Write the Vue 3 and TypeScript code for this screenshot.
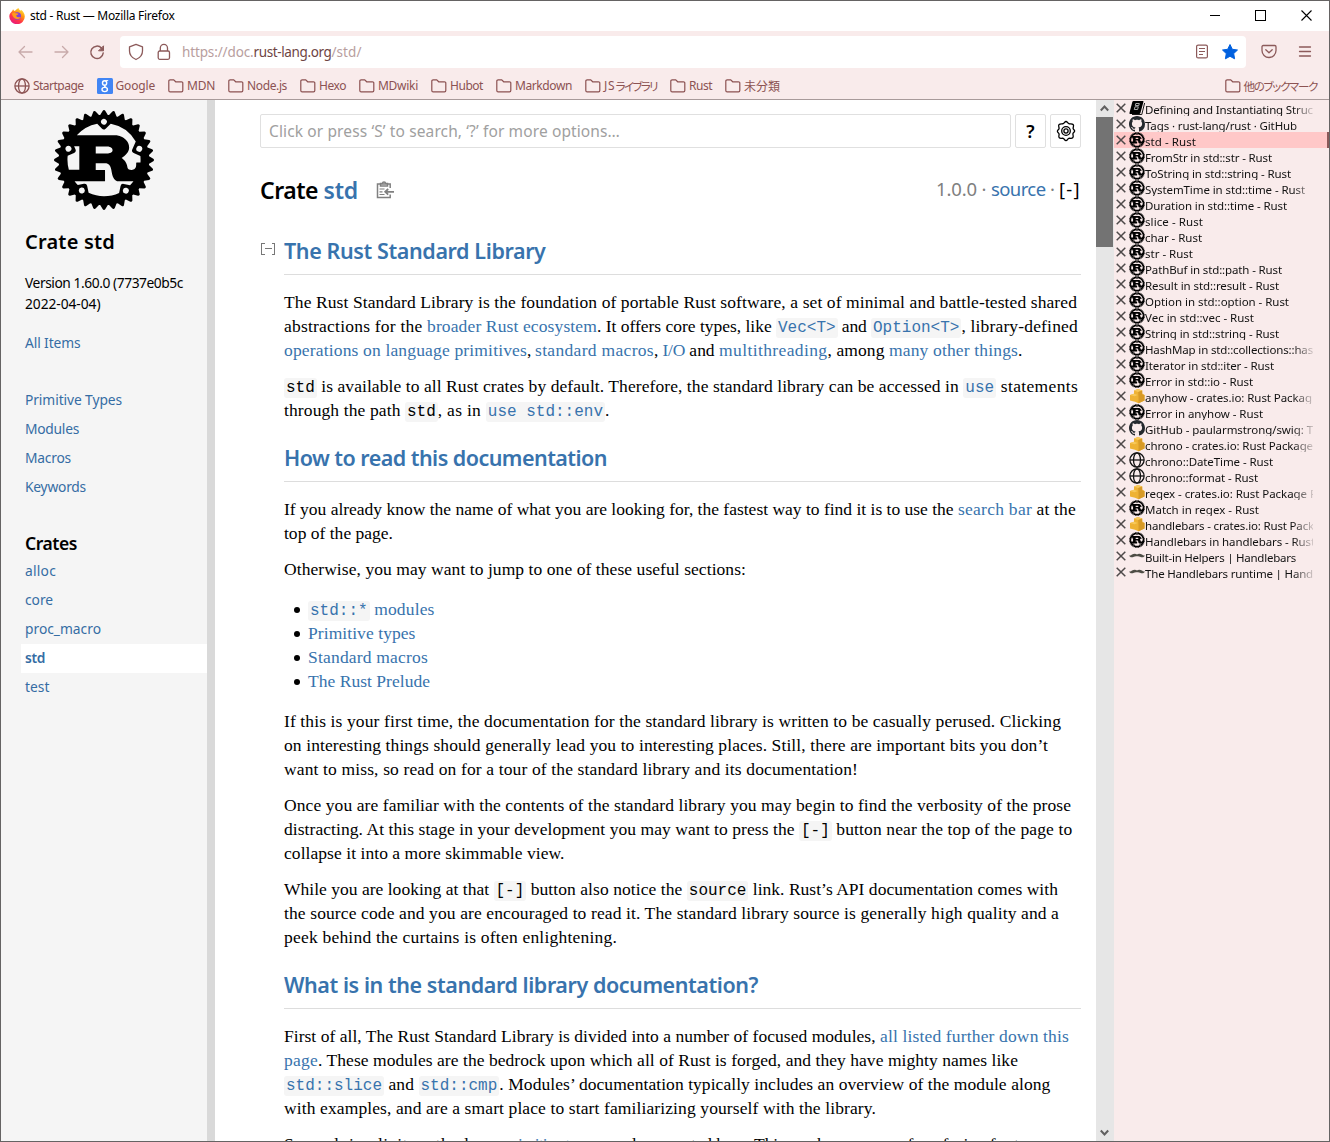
<script setup lang="ts">
import type { Directive } from 'vue'

// Tracks the text so that it fills the given width in pixels.
const vFit: Directive<HTMLElement, number> = {
  mounted(el, { value }) {
    const natural = el.getBoundingClientRect().width
    const count = Array.from(el.textContent ?? '').length
    if (natural && count) el.style.letterSpacing = `${(value - natural) / count}px`
  },
}

type Kind = 't' | 'a' | 'c' | 'ca' | 'b'
type Seg = [string, number, Kind?]
interface Block {
  kind: 'h' | 'p' | 'ul'
  lines: Seg[][]
}

const blocks: Block[] = [
  { kind: 'h', lines: [[['The Rust Standard Library', 261.5]]] },
  {
    kind: 'p',
    lines: [
      [['The Rust Standard Library is the foundation of portable Rust software, a set of minimal and battle-tested shared', 793]],
      [['abstractions for the ', 143], ['broader Rust ecosystem', 170, 'a'], ['. It offers core types, like ', 179], ['Vec<T>', 57.6, 'ca'], [' and ', 33.4], ['Option<T>', 86.4, 'ca'], [', library-defined', 116.5]],
      [['operations on language primitives', 243, 'a'], [', ', 8], ['standard macros', 119, 'a'], [', ', 8.5], ['I/O', 22.5, 'a'], [' and ', 34], ['multithreading', 108.5, 'a'], [', among ', 61.5], ['many other things', 129, 'a'], ['.', 4]],
    ],
  },
  {
    kind: 'p',
    lines: [
      [['std', 28.8, 'c'], [' is available to all Rust crates by default. Therefore, the standard library can be accessed in ', 646.5], ['use', 28.8, 'ca'], [' statements', 82]],
      [['through the path ', 121], ['std', 28.8, 'c'], [', as in ', 48], ['use std::env', 115.2, 'ca'], ['.', 4]],
    ],
  },
  { kind: 'h', lines: [[['How to read this documentation', 323]]] },
  {
    kind: 'p',
    lines: [
      [['If you already know the name of what you are looking for, the fastest way to find it is to use the ', 674], ['search bar', 74, 'a'], [' at the', 44]],
      [['top of the page.', 109]],
    ],
  },
  { kind: 'p', lines: [[['Otherwise, you may want to jump to one of these useful sections:', 462]]] },
  {
    kind: 'ul',
    lines: [
      [['std::*', 57.6, 'ca'], [' modules', 65, 'a']],
      [['Primitive types', 107.5, 'a']],
      [['Standard macros', 120, 'a']],
      [['The Rust Prelude', 122, 'a']],
    ],
  },
  {
    kind: 'p',
    lines: [
      [['If this is your first time, the documentation for the standard library is written to be casually perused. Clicking', 777]],
      [['on interesting things should generally lead you to interesting places. Still, there are important bits you don’t', 764]],
      [['want to miss, so read on for a tour of the standard library and its documentation!', 574]],
    ],
  },
  {
    kind: 'p',
    lines: [
      [['Once you are familiar with the contents of the standard library you may begin to find the verbosity of the prose', 787]],
      [['distracting. At this stage in your development you may want to press the ', 515], ['[-]', 28.8, 'b'], [' button near the top of the page to', 240.5]],
      [['collapse it into a more skimmable view.', 280.5]],
    ],
  },
  {
    kind: 'p',
    lines: [
      [['While you are looking at that ', 209.5], ['[-]', 28.8, 'b'], [' button also notice the ', 160.5], ['source', 57.6, 'c'], [' link. Rust’s API documentation comes with', 309.5]],
      [['the source code and you are encouraged to read it. The standard library source is generally high quality and a', 775]],
      [['peek behind the curtains is often enlightening.', 333]],
    ],
  },
  { kind: 'h', lines: [[['What is in the standard library documentation?', 474]]] },
  {
    kind: 'p',
    lines: [
      [['First of all, The Rust Standard Library is divided into a number of focused modules, ', 596], ['all listed further down this', 189, 'a']],
      [['page', 34, 'a'], ['. These modules are the bedrock upon which all of Rust is forged, and they have mighty names like', 700]],
      [['std::slice', 96, 'ca'], [' and ', 34.5], ['std::cmp', 76.8, 'ca'], ['. Modules’ documentation typically includes an overview of the module along', 551]],
      [['with examples, and are a smart place to start familiarizing yourself with the library.', 592]],
    ],
  },
  {
    kind: 'p',
    lines: [[['Second, implicit methods on ', 221], ['primitive types', 93, 'a'], [' are documented here. This can be a source of confusion for two', 442]]],
  },
]

const segClass: Record<Kind, string> = { t: '', a: 'link', c: 'code', ca: 'code link', b: 'code' }

interface Bookmark {
  parts: [string, number][]
  icon?: string
}
const bookmarks: Bookmark[] = [
  { parts: [['Startpage', 50.5]], icon: 'globe' },
  { parts: [['Google', 39.5]], icon: 'google' },
  { parts: [['MDN', 28]] },
  { parts: [['Node.js', 40]] },
  { parts: [['Hexo', 27]] },
  { parts: [['MDwiki', 40]] },
  { parts: [['Hubot', 33]] },
  { parts: [['Markdown', 57]] },
  { parts: [['JS', 11.5], ['ライブラリ', 41.5]] },
  { parts: [['Rust', 23]] },
  { parts: [['未分類', 36]] },
]

type Fav = 'book' | 'github' | 'rust' | 'crate' | 'globe' | 'bars'
const tabs: [string, number, Fav][] = [
  ['Defining and Instantiating Struc', 168, 'book'],
  ['Tags · rust-lang/rust · GitHub', 152, 'github'],
  ['std - Rust', 51, 'rust'],
  ['FromStr in std::str - Rust', 127, 'rust'],
  ['ToString in std::string - Rust', 146, 'rust'],
  ['SystemTime in std::time - Rust', 160, 'rust'],
  ['Duration in std::time - Rust', 142, 'rust'],
  ['slice - Rust', 58, 'rust'],
  ['char - Rust', 57, 'rust'],
  ['str - Rust', 48, 'rust'],
  ['PathBuf in std::path - Rust', 137, 'rust'],
  ['Result in std::result - Rust', 134, 'rust'],
  ['Option in std::option - Rust', 144, 'rust'],
  ['Vec in std::vec - Rust', 109, 'rust'],
  ['String in std::string - Rust', 134, 'rust'],
  ['HashMap in std::collections::has', 168, 'rust'],
  ['Iterator in std::iter - Rust', 129, 'rust'],
  ['Error in std::io - Rust', 108, 'rust'],
  ['anyhow - crates.io: Rust Packag', 167, 'crate'],
  ['Error in anyhow - Rust', 118, 'rust'],
  ['GitHub - paularmstrong/swig: T', 168, 'github'],
  ['chrono - crates.io: Rust Package', 168, 'crate'],
  ['chrono::DateTime - Rust', 128, 'globe'],
  ['chrono::format - Rust', 113, 'globe'],
  ['regex - crates.io: Rust Package R', 172, 'crate'],
  ['Match in regex - Rust', 114, 'rust'],
  ['handlebars - crates.io: Rust Pack', 169, 'crate'],
  ['Handlebars in handlebars - Rust', 170, 'rust'],
  ['Built-in Helpers | Handlebars', 151, 'bars'],
  ['The Handlebars runtime | Hand', 168, 'bars'],
]

const sections: [string, number][] = [['Primitive Types', 97], ['Modules', 54], ['Macros', 46], ['Keywords', 61]]
const crates: [string, number][] = [['alloc', 31], ['core', 28], ['proc_macro', 76], ['std', 20], ['test', 24.5]]
</script>

<template>
  <svg class="defs" width="0" height="0">
    <symbol id="rust" viewBox="0 0 24 24">
      <path d="M23.8346 11.7033l-1.0073-.6236a13.7268 13.7268 0 00-.0283-.2936l.8656-.8069a.3483.3483 0 00-.1154-.578l-1.1066-.414a8.4958 8.4958 0 00-.087-.2856l.6904-.9587a.3462.3462 0 00-.2257-.5446l-1.1663-.1894a9.3574 9.3574 0 00-.1407-.2622l.49-1.0761a.3437.3437 0 00-.0274-.3361.3486.3486 0 00-.3006-.154l-1.1845.0416a6.7444 6.7444 0 00-.1873-.2268l.2723-1.153a.3472.3472 0 00-.417-.4172l-1.1532.2724a14.0183 14.0183 0 00-.2278-.1873l.0415-1.1845a.3442.3442 0 00-.49-.328l-1.076.491c-.0872-.0476-.1742-.0952-.2623-.1407l-.1903-1.1673A.3483.3483 0 0016.256.955l-.9597.6905a8.4867 8.4867 0 00-.2855-.086l-.414-1.1066a.3483.3483 0 00-.5781-.1154l-.8069.8666a9.2936 9.2936 0 00-.2936-.0284L12.2946.1683a.3462.3462 0 00-.5892 0l-.6236 1.0073a13.7383 13.7383 0 00-.2936.0284L9.9803.3374a.3462.3462 0 00-.578.1154l-.4141 1.1065c-.0962.0274-.1903.0567-.2855.086L7.744.955a.3483.3483 0 00-.5447.2258L7.009 2.348a9.3574 9.3574 0 00-.2622.1407l-1.0762-.491a.3462.3462 0 00-.49.328l.0416 1.1845a7.9826 7.9826 0 00-.2278.1873L3.8413 3.425a.3472.3472 0 00-.4171.4171l.2713 1.1531c-.0628.075-.1255.1509-.1863.2268l-1.1845-.0415a.3462.3462 0 00-.328.49l.491 1.0761a9.167 9.167 0 00-.1407.2622l-1.1662.1894a.3483.3483 0 00-.2258.5446l.6904.9587a13.303 13.303 0 00-.087.2855l-1.1065.414a.3483.3483 0 00-.1155.5781l.8656.807a9.2936 9.2936 0 00-.0283.2935l-1.0073.6236a.3442.3442 0 000 .5892l1.0073.6236c.008.0982.0182.1964.0283.2936l-.8656.8079a.3462.3462 0 00.1155.578l1.1065.4141c.0273.0962.0567.1914.087.2855l-.6904.9587a.3452.3452 0 00.2268.5447l1.1662.1893c.0456.088.0922.1751.1408.2622l-.491 1.0762a.3462.3462 0 00.328.49l1.1834-.0415c.0618.0769.1235.1528.1873.2277l-.2713 1.1541a.3462.3462 0 00.4171.4161l1.153-.2713c.075.0638.151.1255.2279.1863l-.0415 1.1845a.3442.3442 0 00.49.327l1.0761-.49c.087.0486.1741.0951.2622.1407l.1903 1.1662a.3483.3483 0 00.5447.2268l.9587-.6904a9.299 9.299 0 00.2855.087l.414 1.1066a.3452.3452 0 00.5781.1154l.8079-.8656c.0972.0111.1954.0203.2936.0294l.6236 1.0073a.3472.3472 0 00.5892 0l.6236-1.0073c.0982-.0091.1964-.0183.2936-.0294l.8069.8656a.3483.3483 0 00.578-.1154l.4141-1.1066a8.4626 8.4626 0 00.2855-.087l.9587.6904a.3452.3452 0 00.5447-.2268l.1903-1.1662c.088-.0456.1751-.0931.2622-.1407l1.0762.49a.3472.3472 0 00.49-.327l-.0415-1.1845a6.7267 6.7267 0 00.2267-.1863l1.1531.2713a.3472.3472 0 00.4171-.416l-.2713-1.1542c.0628-.0749.1255-.1508.1863-.2278l1.1845.0415a.3442.3442 0 00.328-.49l-.49-1.076c.0475-.0872.0951-.1742.1407-.2623l1.1662-.1893a.3483.3483 0 00.2258-.5447l-.6904-.9587.087-.2855 1.1066-.414a.3462.3462 0 00.1154-.5781l-.8656-.8079c.0101-.0972.0202-.1954.0283-.2936l1.0073-.6236a.3442.3442 0 000-.5892zm-6.7413 8.3551a.7138.7138 0 01.2986-1.396.714.714 0 11-.2997 1.396zm-.3422-2.3142a.649.649 0 00-.7715.5l-.3573 1.6685c-1.1035.501-2.3285.7795-3.6193.7795a8.7368 8.7368 0 01-3.6951-.814l-.3574-1.6684a.648.648 0 00-.7714-.499l-1.473.3158a8.7216 8.7216 0 01-.7613-.898h7.1676c.081 0 .1356-.0141.1356-.088v-2.536c0-.074-.0536-.0881-.1356-.0881h-2.0966v-1.6077h2.2677c.2065 0 1.1065.0587 1.394 1.2088.0901.3533.2875 1.5044.4232 1.8729.1346.413.6833 1.2381 1.2685 1.2381h3.5716a.7492.7492 0 00.1296-.0131 8.7874 8.7874 0 01-.8119.9526zM6.8369 20.024a.714.714 0 11-.2997-1.396.714.714 0 01.2997 1.396zM4.1177 8.9972a.7137.7137 0 11-1.304.5791.7137.7137 0 011.304-.579zm-.8352 1.9813l1.5347-.6824a.65.65 0 00.33-.8585l-.3158-.7147h1.2432v5.6025H3.5669a8.7753 8.7753 0 01-.2834-3.348zm6.7343-.5437V8.7836h2.9601c.153 0 1.0792.1772 1.0792.8697 0 .575-.7107.7815-1.2948.7815zm10.7574 1.4862c0 .2187-.008.4363-.0243.651h-.9c-.09 0-.1265.0586-.1265.1477v.413c0 .973-.5487 1.1846-1.0296 1.2382-.4576.0517-.9648-.1913-1.0275-.4717-.2704-1.5186-.7198-1.8436-1.4305-2.4034.8817-.5599 1.799-1.386 1.799-2.4915 0-1.1936-.819-1.9458-1.3769-2.3153-.7825-.5163-1.6491-.6195-1.883-.6195H5.4682a8.7651 8.7651 0 014.907-2.7699l1.0974 1.151a.648.648 0 00.9182.0213l1.227-1.1743a8.7753 8.7753 0 016.0044 4.2762l-.8403 1.8982a.652.652 0 00.33.8585l1.6178.7188c.0283.2875.0425.577.0425.8717zm-9.3006-9.5993a.7128.7128 0 11.984 1.0316.7137.7137 0 01-.984-1.0316zm8.3389 6.71a.7107.7107 0 01.9395-.3625.7137.7137 0 11-.9405.3635z" />
    </symbol>
    <symbol id="github" viewBox="0 0 16 16">
      <path fill="#24292e" d="M8 0C3.58 0 0 3.58 0 8c0 3.54 2.29 6.53 5.47 7.59.4.07.55-.17.55-.38 0-.19-.01-.82-.01-1.49-2.01.37-2.53-.49-2.69-.94-.09-.23-.48-.94-.82-1.13-.28-.15-.68-.52-.01-.53.63-.01 1.08.58 1.23.82.72 1.21 1.87.87 2.33.66.07-.52.28-.87.51-1.07-1.78-.2-3.64-.89-3.64-3.95 0-.87.31-1.59.82-2.15-.08-.2-.36-1.02.08-2.12 0 0 .67-.21 2.2.82.64-.18 1.32-.27 2-.27s1.36.09 2 .27c1.53-1.04 2.2-.82 2.2-.82.44 1.1.16 1.92.08 2.12.51.56.82 1.27.82 2.15 0 3.07-1.87 3.75-3.65 3.95.29.25.54.73.54 1.48 0 1.07-.01 1.93-.01 2.2 0 .21.15.46.55.38A8.01 8.01 0 0016 8c0-4.42-3.58-8-8-8z" />
    </symbol>
    <symbol id="globe" viewBox="0 0 16 16">
      <g fill="none" stroke="currentColor" stroke-width="1.3">
        <circle cx="8" cy="8" r="7.1" />
        <ellipse cx="8" cy="8" rx="3.5" ry="7.1" />
        <path d="M1 8h14" />
      </g>
    </symbol>
    <symbol id="google" viewBox="0 0 16 16">
      <rect width="16" height="16" rx="1.5" fill="#4285f4" />
      <g fill="none" stroke="#fff" stroke-width="1.4">
        <ellipse cx="7.6" cy="4.9" rx="2.1" ry="2.2" />
        <path d="M8.2 7.1c-1.2.9-.6 1.5.8 2.2" />
        <ellipse cx="7.7" cy="11.5" rx="2.7" ry="2.1" />
        <path d="M8.2 2.6h3" stroke-width="1" />
      </g>
    </symbol>
    <symbol id="folder" viewBox="0 0 16 16">
      <path fill="none" stroke="currentColor" stroke-width="1.2" d="M.8 12.5V3.2a1.3 1.3 0 0 1 1.3-1.3h3.6l2 1.9h5.8a1.3 1.3 0 0 1 1.3 1.3v7.4a1.3 1.3 0 0 1-1.3 1.3H2.1a1.3 1.3 0 0 1-1.3-1.3z" />
    </symbol>
    <symbol id="book" viewBox="0 0 16 16">
      <path d="M4.5 1h9.3c.6 0 .8.4.6 1l-3 11c-.2.7-.6 1-1.2 1H1.5C.7 14 .3 13.5.5 12.7L3.3 2c.2-.7.6-1 1.2-1z" />
      <path d="M15.6 3l-2.8 11.5H3" fill="none" stroke="#000" stroke-width=".9" />
      <path d="M6.8 3.5h3.5L9.8 5.5H6.3zM6 6.8h3.3L8.6 9.5H5.3z" fill="none" stroke="#bbb" stroke-width=".9" />
    </symbol>
    <symbol id="crate" viewBox="0 0 16 16">
      <path fill="#eeb234" d="M5 2.5l4-1.5 4.2 1.5v3L15.5 7v5.5L9.5 15.2 6 13.8l-5-1.3V7l4-1.2z" />
      <path fill="#f7c95c" d="M5 2.5l4-1.5 4.2 1.5-4 1.5zM1 7l4-1.2L8.8 7l-3.3 1.2z" />
      <path fill="#d79a26" d="M9.2 4l4-1.5v4L15.5 7v5.5l-6 2.7V9z" />
    </symbol>
    <symbol id="bars" viewBox="0 0 16 16">
      <path fill="#4d4d45" d="M.2 7.3c1 .7 1.8.1 2.8-.7C5 5.3 7 5.7 8 6.5c1-.8 3-1.2 5 .1 1 .8 1.8 1.4 2.8.7-.3 1.8-2 2.4-3.6 1.9C10.5 8.4 9.5 8.2 8 8.2s-2.5.2-4.2 1C2.2 9.7.5 9.1.2 7.3z" />
    </symbol>
  </svg>

  <div class="window">
    <header class="titlebar">
      <svg class="fox" viewBox="0 0 16 16">
        <defs>
          <linearGradient id="flame" x1=".85" y1="0" x2=".2" y2="1">
            <stop offset="0" stop-color="#fff44f" />
            <stop offset=".35" stop-color="#ff980e" />
            <stop offset=".65" stop-color="#ff3647" />
            <stop offset="1" stop-color="#e31587" />
          </linearGradient>
        </defs>
        <path fill="url(#flame)" d="M3.2 3c.3-.2.4-1 1-1.7.1.9.7 1.5 1.6 1.7C7 2.3 7.5 1.2 9.6.1c0 1 .9 1.8 2 2.7.3-.1.3-.6.4-1 2.2 1.5 3.8 4 3.8 6.7A7.7 7.7 0 1 1 .3 8.5C.3 6 1.6 4.8 3.2 3z" />
        <circle cx="8.3" cy="8" r="3.7" fill="#8040dc" />
        <path fill="#ff9a1a" d="M2.8 5.5c1.5-1 3-.8 4.2-.2 1 .2 2.2.1 2.4.6-.3.9-1.6.8-2 1.4-.3.7.2 1.9 1.9 2 1 .1 1.7-.5 2.5-.2-.7 1.5-2.2 2.3-4 2C5 10.7 3.5 8.5 2.8 5.5z" />
      </svg>
      <span v-fit="144.5" class="caption">std - Rust — Mozilla Firefox</span>
      <svg class="controls" viewBox="0 0 120 14" fill="none" stroke="#000" shape-rendering="crispEdges">
        <path d="M5 6.5h10M50.5 1.5h10v10h-10z" />
        <path d="M96.500 1.500l10 10M106.500 1.500l-10 10" shape-rendering="auto" stroke-width="1.1" />
      </svg>
    </header>

    <nav class="toolbar">
      <svg class="nav-icons" viewBox="0 0 100 20" fill="none" stroke="#8c5a5a" stroke-width="1.3" stroke-linecap="round" stroke-linejoin="round">
        <path opacity=".45" d="M5 10h13M10.5 4.5L5 10l5.5 5.5M54 10H41M48.5 4.5L54 10l-5.5 5.5" />
        <path stroke-width="1.5" d="M87.5 6A6.2 6.2 0 1 0 89.2 11" />
        <path fill="#8c5a5a" stroke-width="1" d="M89.5 4.2v4.6h-4.6z" />
      </svg>
      <div class="urlbar">
        <svg class="lock" viewBox="0 0 44 18" fill="none" stroke="#8c5a5a" stroke-width="1.3" stroke-linejoin="round">
          <path d="M8 1.3l6.5 2.5v4.2c0 3.8-2.5 6.8-6.5 8.5C4 14.8 1.5 11.8 1.5 8V3.8z" />
          <rect x="30.2" y="8" width="11.3" height="8.3" rx="1.5" />
          <path d="M32.3 8V5a3.6 3.6 0 0 1 7.2 0v3" />
        </svg>
        <span class="url"><span v-fit="71.5" class="dim">https://doc.</span><span v-fit="78">rust-lang.org</span><span v-fit="30" class="dim">/std/</span></span>
        <svg class="page-actions" viewBox="0 0 46 18">
          <g fill="none" stroke="#8c5a5a" stroke-width="1.2">
            <rect x="2.6" y="2.1" width="10.8" height="12.8" rx="1.5" />
            <path d="M5 5.5h6M5 8.5h6M5 11.5h4" />
          </g>
          <path fill="#0060df" stroke="#0060df" stroke-width="1" stroke-linejoin="round" d="M36 1.5l2.3 4.8 5.2.7-3.8 3.6.9 5.2L36 13.3l-4.6 2.5.9-5.2-3.8-3.6 5.2-.7z" />
        </svg>
      </div>
      <svg class="menu-icons" viewBox="0 0 52 18" fill="none" stroke="#8c5a5a" stroke-width="1.3" stroke-linecap="round" stroke-linejoin="round">
        <path d="M3.2 2.5h11.6a1.2 1.2 0 0 1 1.2 1.2V7.5a7 7 0 0 1-14 0V3.7a1.2 1.2 0 0 1 1.2-1.2zM5.8 6.7L9 9.7l3.2-3" />
        <path d="M39.5 4h11M39.5 8.5h11M39.5 13h11" />
      </svg>
    </nav>

    <nav class="bookmarks">
      <span v-for="(mark, i) in bookmarks" :key="i" class="bookmark">
        <svg class="fav"><use :href="'#' + (mark.icon ?? 'folder')" /></svg>
        <span v-for="[text, width] in mark.parts" :key="text" v-fit="width" :class="{ kana: text.includes('ラ') }">{{ text }}</span>
      </span>
      <span class="bookmark last">
        <svg class="fav"><use href="#folder" /></svg>
        <span v-fit="73.5" class="kana">他のブックマーク</span>
      </span>
    </nav>

    <div class="body">
      <aside class="sidebar">
        <svg class="logo"><use href="#rust" /></svg>
        <h2 class="side-title"><span v-fit="90">Crate std</span></h2>
        <div class="version">
          <div><span v-fit="158">Version 1.60.0 (7737e0b5c</span></div>
          <div><span v-fit="75.5">2022-04-04)</span></div>
        </div>
        <a class="side-link all"><span v-fit="55.5">All Items</span></a>
        <a v-for="[name, width] in sections" :key="name" class="side-link"><span v-fit="width">{{ name }}</span></a>
        <h3 class="side-sub"><span v-fit="52">Crates</span></h3>
        <a v-for="[name, width] in crates" :key="name" class="side-link" :class="{ current: name === 'std' }"><span v-fit="width">{{ name }}</span></a>
      </aside>
      <div class="resizer"></div>

      <main class="content">
        <div class="search-row">
          <div class="search"><span v-fit="351">Click or press ‘S’ to search, ‘?’ for more options…</span></div>
          <div class="square">?</div>
          <div class="square">
            <svg width="22" height="22" viewBox="0 0 22 22" fill="none" stroke="#000" stroke-width="1.3" stroke-linejoin="round">
              <path d="M11 1.5c1.300 0 1.700 1.700 2.900 2.200s3-.5 4.200.8-.1 2.600 0 3.900 1.900 1.600 1.500 2.900-1.800 1.400-1.700 2.700.9 2.700-.2 3.800-2.600.1-3.900.6-1.500 2.200-2.800 2.200-1.600-1.700-2.800-2.200-2.800.5-3.900-.6-.1-2.500-.2-3.800-1.700-1.400-1.700-2.700 1.600-1.600 1.700-2.900-1.200-2.800 0-3.900 2.900-.3 4.100-.8S9.700 1.500 11 1.500z" />
              <circle cx="11" cy="11" r="4.3" />
              <circle cx="11" cy="11" r="2.1" />
            </svg>
          </div>
        </div>

        <div class="heading">
          <h1><span v-fit="63.5">Crate </span><span v-fit="34.5" class="hlink">std</span></h1>
          <svg class="copy" viewBox="0 0 18 19" fill="none" stroke="#808080" stroke-width="1.5">
            <path d="M14.2 8V4H1.5v13.5h12.7v-3M4.5 6V3.5h2a1.5 1.5 0 0 1 3 0h2V6z" />
            <path d="M3.5 9h5M3.5 11.8h3M3.5 14.5h5" stroke-width="1.2" />
            <path d="M18 11.8H9.5M12.2 9l-3 2.8 3 2.8" stroke-width="1.8" />
          </svg>
          <div class="meta"><span v-fit="55" class="grey">1.0.0 · </span><span v-fit="54.5" class="hlink">source</span><span v-fit="13.5" class="grey"> · </span><span v-fit="22">[-]</span></div>
        </div>

        <div class="doc">
          <svg class="collapse" viewBox="0 0 14 14" fill="none" stroke="#777" shape-rendering="crispEdges"><path d="M3.5 1.5h-3v11h3M10.5 1.5h3v11h-3M3.5 6.5h7" /></svg>
          <section v-for="(block, i) in blocks" :key="i" :class="block.kind">
            <div v-for="(line, j) in block.lines" :key="j" class="line"><span v-for="([text, width, kind], k) in line" :key="k" :class="segClass[kind ?? 't']"><span v-fit="width">{{ text }}</span></span></div>
          </section>
        </div>
      </main>

      <div class="scrollbar">
        <svg viewBox="0 0 17 17"><path d="M4.8 10.5l3.7-4 3.7 4" /></svg>
        <div class="thumb"></div>
        <svg class="down" viewBox="0 0 17 17"><path d="M4.8 6.5l3.7 4 3.7-4" /></svg>
      </div>

      <aside class="tabs">
        <div v-for="([name, width, fav], i) in tabs" :key="i" class="tab" :class="{ active: i === 2 }">
          <svg class="close" viewBox="0 0 10 10"><path d="M.7.7l8.6 8.6M9.3.7L.7 9.3" /></svg>
          <svg class="fav"><use :href="'#' + fav" /></svg>
          <span class="label"><span v-fit="width">{{ name }}</span></span>
        </div>
      </aside>
    </div>
  </div>
</template>

<style>
body {
  overflow: hidden;
}
</style>

<style scoped>
.defs {
  position: absolute;
}
.window {
  box-sizing: border-box;
  width: 1330px;
  height: 1142px;
  border: 1px solid #656363;
  display: flex;
  flex-direction: column;
  overflow: hidden;
  background: #f9ebeb;
  font-family: "Noto Sans", "Noto Sans CJK JP", sans-serif;
  white-space: pre;
  font-variant-ligatures: none;
}
.titlebar {
  flex: none;
  height: 30px;
  background: #fff;
  display: flex;
  align-items: center;
  padding-left: 8px;
  font-size: 12px;
  color: #000;
}
.caption {
  padding-bottom: 1px;
}
.fox {
  width: 16px;
  height: 16px;
  margin-right: 5px;
}
.controls {
  width: 120px;
  height: 14px;
  margin-left: auto;
  margin-right: 4px;
}
.toolbar {
  flex: none;
  height: 41px;
  display: flex;
  align-items: center;
}
.nav-icons {
  width: 100px;
  height: 20px;
  margin-left: 13px;
}
.urlbar {
  width: 1126px;
  height: 32px;
  margin-left: 6px;
  border-radius: 4px;
  background: #fff;
  display: flex;
  align-items: center;
}
.lock {
  width: 44px;
  height: 18px;
  margin-left: 8px;
}
.url {
  margin-left: 10px;
  font-size: 13.5px;
  color: #6e4444;
}
.dim {
  color: #b89e9e;
}
.page-actions {
  width: 46px;
  height: 18px;
  margin-left: auto;
  margin-right: 6px;
}
.menu-icons {
  width: 52px;
  height: 18px;
  margin-left: 14px;
}
.bookmarks {
  flex: none;
  height: 27px;
  display: flex;
  align-items: center;
  padding: 0 12px 0 13px;
  border-bottom: 1px solid #a89a9a;
  font-size: 12px;
  color: #8c5252;
}
.bookmark {
  display: flex;
  align-items: center;
  margin-right: 13px;
}
.bookmark .fav {
  width: 16px;
  height: 16px;
  margin-right: 3px;
}
.bookmark.last {
  margin-left: auto;
  margin-right: 0;
}
.kana {
  font-feature-settings: "palt";
  font-size: 11.5px;
}
.body {
  flex: 1;
  min-height: 0;
  display: flex;
}
.sidebar {
  width: 206px;
  background: #f5f5f5;
  font-size: 13.8px;
}
.logo {
  display: block;
  width: 100px;
  height: 100px;
  margin: 10px 0 0 53px;
}
.side-title {
  margin: 19px 0 0 24px;
  font-size: 20px;
  line-height: 26px;
  font-weight: 600;
}
.version {
  margin: 17px 0 0 24px;
  line-height: 21px;
}
.side-link {
  display: block;
  height: 29px;
  line-height: 27px;
  margin-left: 20px;
  padding-left: 4px;
  color: #356da4;
}
.side-link.all {
  margin-top: 15px;
  margin-bottom: 28px;
}
.side-link.current {
  background: #fff;
  font-weight: 600;
}
.side-sub {
  margin: 28px 0 1px 24px;
  font-size: 17.5px;
  line-height: 26px;
  font-weight: 600;
}
.resizer {
  width: 8px;
  background: #d9d9d9;
}
.content {
  box-sizing: border-box;
  width: 881px;
  padding: 14px 15px 0 45px;
  background: #fff;
  overflow: hidden;
}
.search-row {
  display: flex;
  gap: 4px;
}
.search,
.square {
  box-sizing: border-box;
  height: 34px;
  border: 1px solid #e0e0e0;
  border-radius: 2px;
}
.search {
  width: 751px;
  padding-left: 8px;
  line-height: 32px;
  font-size: 15.5px;
  color: #a0a0a0;
}
.square {
  width: 31px;
  display: flex;
  align-items: center;
  justify-content: center;
  font-size: 18px;
  font-weight: 600;
}
.heading {
  height: 60px;
  margin-top: 12px;
  display: flex;
  align-items: center;
}
h1 {
  margin: 0;
  font-size: 23px;
  font-weight: 600;
}
.hlink {
  color: #3873ad;
}
.copy {
  width: 18px;
  height: 19px;
  margin-left: 18px;
  margin-bottom: 2px;
}
.meta {
  margin-left: auto;
  padding-bottom: 3px;
  font-size: 18.5px;
}
.grey {
  color: #808080;
}
.doc {
  position: relative;
  padding: 19px 0 0 24px;
}
.collapse {
  position: absolute;
  left: 1px;
  top: 22px;
  width: 14px;
  height: 14px;
}
.line {
  height: 24px;
  line-height: 24px;
}
.h {
  box-sizing: border-box;
  height: 36px;
  margin: 23px 0 16px;
  border-bottom: 1px solid #ddd;
  color: #3873ad;
  font-size: 21.5px;
  font-weight: 600;
}
.h:first-of-type {
  margin-top: 0;
}
.p,
.ul {
  font-family: "Liberation Serif", serif;
  font-size: 17.5px;
  color: #000;
}
.p .line,
.ul .line {
  line-height: 22px;
}
.p + .p {
  margin-top: 12px;
}
.ul {
  margin: 16px 0;
  padding-left: 24px;
}
.ul .line {
  position: relative;
}
.ul .line::before {
  content: "";
  position: absolute;
  left: -14px;
  top: 9px;
  width: 6px;
  height: 6px;
  border-radius: 50%;
  background: #000;
}
.link {
  color: #3873ad;
}
.code {
  padding: 1px 2px;
  border-radius: 3px;
  background: #f5f5f5;
  font-family: "Liberation Mono", monospace;
  font-size: 16px;
}
.scrollbar {
  width: 18px;
  background: #e6e6e6;
  display: flex;
  flex-direction: column;
}
.scrollbar svg {
  width: 17px;
  height: 17px;
  fill: none;
  stroke: #606060;
  stroke-width: 2;
}
.thumb {
  width: 17px;
  height: 130px;
  background: #737373;
}
.scrollbar .down {
  margin-top: auto;
}
.tabs {
  flex: 1;
  color: #111;
}
.tab {
  height: 16px;
  display: flex;
  align-items: center;
}
.tab.active {
  background: #ffc8c8;
  box-shadow: inset -2px 0 #8a5a5a;
}
.close {
  width: 10px;
  height: 10px;
  margin: 0 3px 0 2px;
  fill: none;
  stroke: #4d4949;
  stroke-width: 1.5;
}
.tab .fav {
  flex: none;
  width: 16px;
  height: 16px;
}
.label {
  width: 168px;
  height: 15px;
  line-height: 17px;
  font-size: 11.5px;
  overflow: hidden;
  mask-image: linear-gradient(to right, #000 148px, transparent 172px);
}
</style>
